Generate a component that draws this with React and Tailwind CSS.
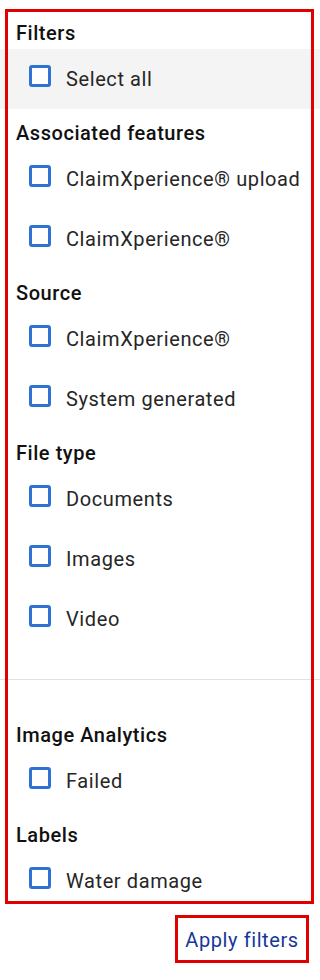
const SECTIONS = [
  { title: 'Associated features', items: ['ClaimXperience® upload', 'ClaimXperience®'] },
  { title: 'Source', items: ['ClaimXperience®', 'System generated'] },
  { title: 'File type', items: ['Documents', 'Images', 'Video'] },
]

const EXTRA_SECTIONS = [
  { title: 'Image Analytics', items: ['Failed'] },
  { title: 'Labels', items: ['Water damage'] },
]

function Heading({ children }) {
  return (
    <div className="h-[40px] pt-[12px] pl-[16px] text-[20px] leading-6 font-medium text-[#111111] tracking-[0.55px]">
      {children}
    </div>
  )
}

function CheckRow({ label, shaded = false }) {
  return (
    <label className={`flex items-center h-[60px] pl-[29px] ${shaded ? 'bg-[#f4f4f4]' : ''}`}>
      <span className="w-[22px] h-[22px] mb-[6px] shrink-0 rounded-[3px] border-[3px] border-[#2e72d2] bg-white" />
      <span className="ml-[15px] text-[20px] leading-6 text-[#262626] tracking-[0.6px]">{label}</span>
    </label>
  )
}

export default function App() {
  return (
    <div className="w-[320px] h-[980px] bg-white font-['Roboto',sans-serif]">
      <div className="relative">
        <div className="h-[904px] pt-[9px] overflow-hidden">
          <Heading>Filters</Heading>
          <CheckRow label="Select all" shaded />
          {SECTIONS.map((s) => (
            <div key={s.title}>
              <Heading>{s.title}</Heading>
              {s.items.map((i) => (
                <CheckRow key={i} label={i} />
              ))}
            </div>
          ))}
          <div className="pt-[30px] pb-[31px]">
            <div className="h-px bg-[#e2e2e2]" />
          </div>
          {EXTRA_SECTIONS.map((s) => (
            <div key={s.title}>
              <Heading>{s.title}</Heading>
              {s.items.map((i) => (
                <CheckRow key={i} label={i} />
              ))}
            </div>
          ))}
        </div>
        {/* highlight outline */}
        <div className="absolute left-[5px] top-[9px] w-[309px] h-[895px] border-[3px] border-[#e10000] pointer-events-none" />
      </div>
      <div className="flex justify-end pr-[11px] pt-[11px]">
        <button className="w-[134px] h-[48px] border-[3px] border-[#e10000] text-[20px] leading-6 text-[#17379a] tracking-[0.6px] pt-[2px]">
          Apply filters
        </button>
      </div>
    </div>
  )
}
